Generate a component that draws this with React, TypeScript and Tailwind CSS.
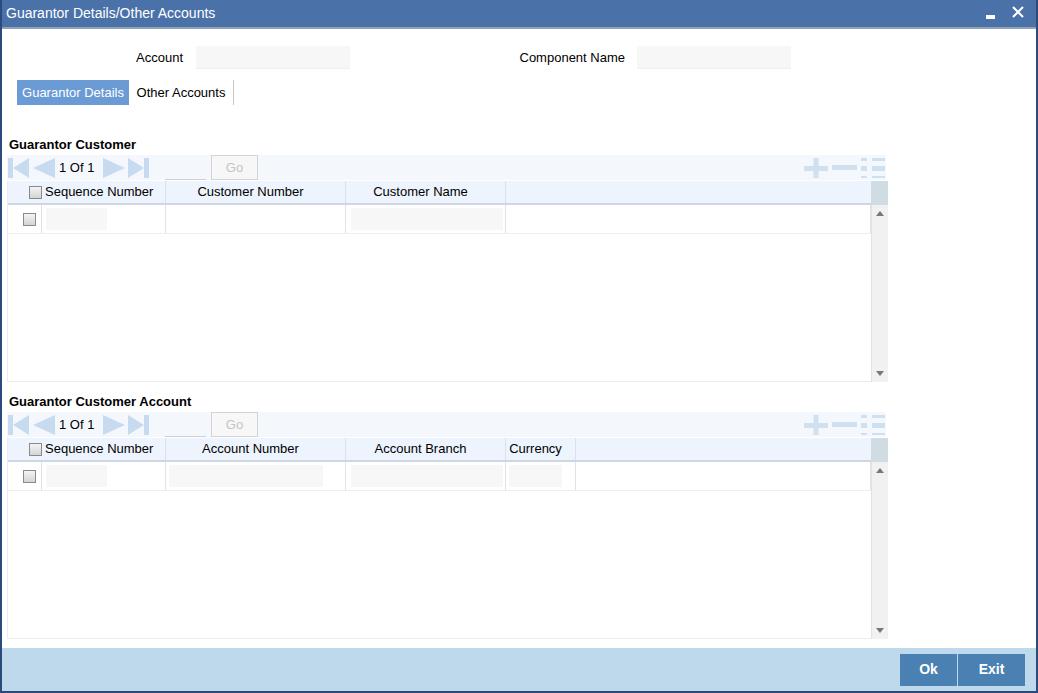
import React from "react";

type Col = { label: string; width: number; field?: { left: number; width: number } };

function Checkbox() {
	return (
		<span className="inline-block w-[13px] h-[13px] border border-[#8a8a8a] bg-gradient-to-b from-[#f4f4f4] to-[#d4d4d4]" />
	);
}

function Pager() {
	const fill = "#c6dbf0";
	return (
		<div className="flex items-center h-full">
			<svg width="21" height="20" viewBox="0 0 21 20" className="ml-[1px]">
				<rect x="0" y="0" width="5" height="20" fill={fill} />
				<polygon points="21,0 5,10 21,20" fill={fill} />
			</svg>
			<svg width="22" height="20" viewBox="0 0 22 20" className="ml-[4px]">
				<polygon points="22,0 0,10 22,20" fill={fill} />
			</svg>
			<span className="ml-[4px] text-[13px] text-black w-[42px]">1 Of 1</span>
			<svg width="22" height="20" viewBox="0 0 22 20" className="ml-[2px]">
				<polygon points="0,0 22,10 0,20" fill={fill} />
			</svg>
			<svg width="21" height="20" viewBox="0 0 21 20" className="ml-[3px]">
				<polygon points="0,0 16,10 0,20" fill={fill} />
				<rect x="16" y="0" width="5" height="20" fill={fill} />
			</svg>
			<span className="ml-[16px] w-[41px] h-[24px] border-b border-[#cfcfcf]" />
			<span className="ml-[5px] w-[47px] h-[25px] border border-[#d3d3d3] bg-[#f7f7f7] text-[#c4c4c4] text-[13px] flex items-center justify-center">
				Go
			</span>
		</div>
	);
}

function ToolIcons() {
	const fill = "#cfe0f1";
	return (
		<div className="flex items-center gap-[4px] pr-[1px]">
			<svg width="24" height="20" viewBox="0 0 24 20">
				<rect x="0" y="8" width="24" height="5" fill={fill} />
				<rect x="9.5" y="0" width="5" height="20" fill={fill} />
			</svg>
			<svg width="25" height="20" viewBox="0 0 25 20">
				<rect x="0" y="7" width="25" height="5" fill={fill} />
			</svg>
			<svg width="24" height="20" viewBox="0 0 24 20">
				<rect x="0" y="0" width="6" height="3" fill={fill} />
				<rect x="11" y="0" width="13" height="3" fill={fill} />
				<rect x="0" y="8" width="6" height="5" fill={fill} />
				<rect x="11" y="8" width="13" height="5" fill={fill} />
				<rect x="0" y="18" width="6" height="2" fill={fill} />
				<rect x="11" y="18" width="13" height="2" fill={fill} />
			</svg>
		</div>
	);
}

function Grid({ title, cols }: { title: string; cols: Col[] }) {
	return (
		<div className="flex flex-col">
			<div className="h-[21px] pl-[7px] flex items-center text-[13px] font-bold text-black">
				{title}
			</div>
			<div className="ml-[5px] w-[879px] h-[25px] bg-[#f4f8fd] flex items-center justify-between">
				<Pager />
				<ToolIcons />
			</div>
			<div className="ml-[5px] w-[881px] h-[201px] flex mt-px">
				<div className="w-[864px] h-full border-l border-b border-[#ececec] flex flex-col">
					<div className="h-[24px] bg-[#edf4fd] border-b-2 border-[#cdd6e2] flex text-[13px] text-black">
						<div className="w-[34px] flex items-center justify-end">
							<Checkbox />
						</div>
						{cols.map((c, i) => (
							<div
								key={c.label}
								style={{ width: c.width }}
								className={
									"flex items-center border-r border-[#d9e2ec] " +
									(i === 0 ? "pl-[3px]" : "justify-center pr-[10px]")
								}
							>
								{c.label}
							</div>
						))}
						<div className="flex-1" />
					</div>
					<div className="h-[29px] flex border-b border-[#f7ece4]">
						<div className="w-[34px] flex items-center pl-[15px] border-r border-[#dde3ea]">
							<Checkbox />
						</div>
						{cols.map((c) => (
							<div
								key={c.label}
								style={{ width: c.width }}
								className="relative border-r border-[#dde3ea]"
							>
								{c.field && (
									<span
										style={{ left: c.field.left, width: c.field.width }}
										className="absolute top-[3px] h-[22px] bg-[#f7f7f7]"
									/>
								)}
							</div>
						))}
						<div className="flex-1 border-r border-[#dde3ea]" />
					</div>
				</div>
				<div className="w-[17px] h-full flex flex-col">
					<div className="h-[24px] bg-[#cfdde2]" />
					<div className="flex-1 bg-[#f1f1f1] border-l border-[#e2e2e2] flex flex-col items-center justify-between py-[6px]">
						<svg width="8" height="5" viewBox="0 0 8 5">
							<polygon points="4,0 8,5 0,5" fill="#777" />
						</svg>
						<svg width="8" height="5" viewBox="0 0 8 5">
							<polygon points="0,0 8,0 4,5" fill="#777" />
						</svg>
					</div>
				</div>
			</div>
		</div>
	);
}

export default function App() {
	return (
		<div
			className="w-[1038px] h-[693px] flex flex-col bg-white border-l-2 border-r-2 border-b-2 border-[#2b4b7d] overflow-hidden"
			style={{ fontFamily: '"Liberation Sans", Arial, sans-serif' }}
		>
			<div className="h-[29px] bg-[#4a72a9] border-b-2 border-[#8fa4b6] flex items-center justify-between pl-[4px] pr-[12px] text-white shrink-0">
				<span className="text-[14px]">Guarantor Details/Other Accounts</span>
				<div className="flex items-center gap-[17px]">
					<span className="w-[9px] h-[4px] bg-white mt-[6px]" />
					<svg width="12" height="12" viewBox="0 0 12 12" className="mb-[3px]">
						<path d="M1 1 L11 11 M11 1 L1 11" stroke="white" strokeWidth="2" />
					</svg>
				</div>
			</div>

			<div className="flex-1 flex flex-col">
				<div className="mt-[17px] h-[23px] flex items-center text-[13px] text-black">
					<span className="w-[181px] text-right">Account</span>
					<span className="ml-[13px] w-[154px] h-[23px] bg-[#f7f7f7] border-b border-[#eeeeee]" />
					<span className="w-[275px] text-right">Component Name</span>
					<span className="ml-[12px] w-[154px] h-[23px] bg-[#f7f7f7] border-b border-[#eeeeee]" />
				</div>

				<div className="mt-[11px] ml-[15px] h-[25px] flex text-[13px]">
					<div className="w-[112px] bg-[#6b9bd5] text-white flex items-center justify-center">
						Guarantor Details
					</div>
					<div className="w-[105px] border-r border-[#c8c8c8] text-black flex items-center justify-center">
						Other Accounts
					</div>
				</div>

				<div className="mt-[29px]">
					<Grid
						title="Guarantor Customer"
						cols={[
							{ label: "Sequence Number", width: 124, field: { left: 4, width: 61 } },
							{ label: "Customer Number", width: 180 },
							{ label: "Customer Name", width: 160, field: { left: 5, width: 152 } },
						]}
					/>
				</div>

				<div className="mt-[9px]">
					<Grid
						title="Guarantor Customer Account"
						cols={[
							{ label: "Sequence Number", width: 124, field: { left: 4, width: 61 } },
							{ label: "Account Number", width: 180, field: { left: 3, width: 154 } },
							{ label: "Account Branch", width: 160, field: { left: 5, width: 152 } },
							{ label: "Currency", width: 70, field: { left: 3, width: 53 } },
						]}
					/>
				</div>
			</div>

			<div className="h-[43px] bg-[#bed8ec] flex items-center justify-end pr-[11px] shrink-0">
				<div className="flex gap-px">
					<div className="w-[57px] h-[32px] bg-[#4a81b2] text-white font-bold text-[14px] flex items-center justify-center">
						Ok
					</div>
					<div className="w-[67px] h-[32px] bg-[#4a81b2] text-white font-bold text-[14px] flex items-center justify-center">
						Exit
					</div>
				</div>
			</div>
		</div>
	);
}
